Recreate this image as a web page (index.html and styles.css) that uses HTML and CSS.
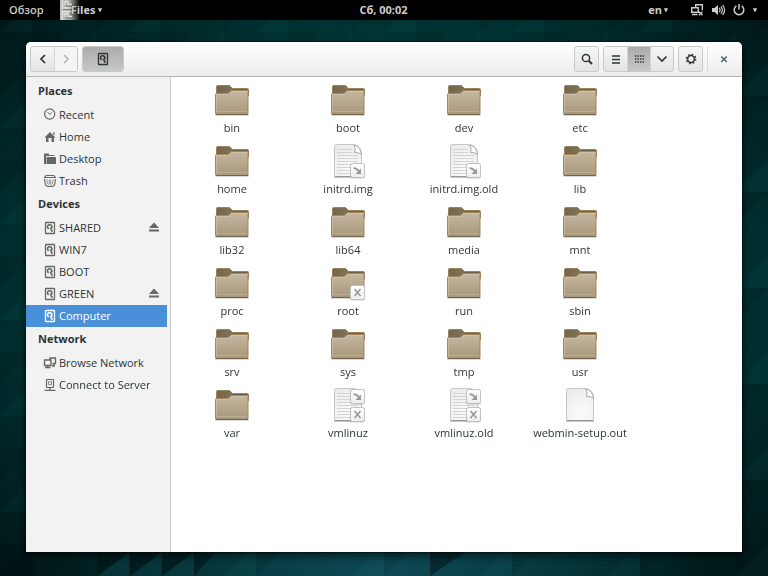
FILE: index.html
```html
<!DOCTYPE html>
<html lang="en">
<head>
<meta charset="utf-8">
<title>Files</title>
<link rel="stylesheet" href="styles.css">
</head>
<body>
<svg class="defs" aria-hidden="true">
  <defs>
    <linearGradient id="g-front" x1="0" y1="0" x2="0" y2="1"><stop offset="0" stop-color="#c5b8a1"/><stop offset="1" stop-color="#a79678"/></linearGradient>
    <linearGradient id="g-back" x1="0" y1="0" x2="1" y2="0"><stop offset="0" stop-color="#75664b"/><stop offset="1" stop-color="#8f7f65"/></linearGradient>
    <radialGradient id="g-paper" cx=".55" cy=".75" r=".8"><stop offset="0" stop-color="#fcfcfc"/><stop offset="1" stop-color="#ebebea"/></radialGradient>
    <linearGradient id="g-emblem" x1="0" y1="0" x2="0" y2="1"><stop offset="0" stop-color="#fff"/><stop offset="1" stop-color="#eee"/></linearGradient>
    <linearGradient id="g-cab" x1="0" y1="0" x2="1" y2="0"><stop offset="0" stop-color="#c2c2bc"/><stop offset=".5" stop-color="#a2a29c"/><stop offset="1" stop-color="#a2a29c" stop-opacity="0"/></linearGradient>
    <symbol id="folder" viewBox="0 0 40 40">
      <rect x="3" y="34" width="34" height="2" rx="1" fill="#000" opacity=".15"/>
      <path d="M4.500 16V6.500q0-1 1-1h12l3 3h15q1 0 1 1V16z" fill="url(#g-back)" stroke="#97835f"/>
      <path d="M20.500 9.500h15" stroke="#6f6047" fill="none"/>
      <path d="M3.500 14.500q0-1 1-1h11.500l3.500-3h15.500q1 0 1 1V33.500q0 1-1 1H4.500q-1 0-1-1z" fill="url(#g-front)" stroke="#a3875a"/>
      <path d="M4.500 32.500V14.500h12l3.500-3h15.500" fill="none" stroke="#d6cbb7" opacity=".5"/>
      <path d="M5 31.500h30" stroke="#bcae94"/>
      <path d="M4 34.500h32" stroke="#74654b"/>
    </symbol>
    <symbol id="paper" viewBox="0 0 40 40">
      <rect x="6" y="35" width="28" height="2" rx="1" fill="#000" opacity=".22"/>
      <path d="M8.500 3.500H26q7 2 7.500 8.500v23q0 .5-.5.5H7q-.5 0-.5-.5V5.500q0-2 2-2z" fill="url(#g-paper)" stroke="#c6c6c4"/>
      <path d="M26 4q2 4 .5 7.500 4-.5 7 2-1-8-7.500-9.500z" fill="#fff" stroke="#aaaaa8"/>
      <path d="M7 35.500h26" stroke="#979795"/>
    </symbol>
    <symbol id="text-lines" viewBox="0 0 40 40">
      <path d="M9 8.500h15M9 11.500h15M9 14.500h21M9 17.500h21M9 20.500h21M9 23.500h21M9 26.500h21M9 29.500h14M9 32.500h14" stroke="#d3d3d1"/>
    </symbol>
    <symbol id="emblem" viewBox="0 0 17 17">
      <rect x="1" y="1.500" width="15" height="15" rx="2" fill="#000" opacity=".2"/>
      <rect x="1.500" y="1.500" width="14" height="14" rx="2" fill="url(#g-emblem)" stroke="#c0c0be"/>
    </symbol>
    <symbol id="link-emblem" viewBox="0 0 17 17"><use href="#emblem"/><path d="M4.500 6.200q3.500 0 5.500 3.200" stroke="#989896" stroke-width="1.800" fill="none"/><path d="M12 6.500v5.500H6.500z" fill="#989896"/></symbol>
    <symbol id="lock-emblem" viewBox="0 0 17 17"><use href="#emblem"/><path d="M5.500 5l6 7M11.500 5l-6 7" stroke="#989896" stroke-width="1.600"/></symbol>

    <symbol id="recent" viewBox="0 0 16 16"><circle cx="7.700" cy="7" r="5.100" fill="none" stroke="currentColor" stroke-width="1.200"/><path d="M5.500 5l2.200 2.500L10 5.500" fill="none" stroke="currentColor"/></symbol>
    <symbol id="home" viewBox="0 0 16 16"><path d="M2.500 8.500L8 3l5.500 5.500h-1.500v4.500H9.500V9h-3v4H4V8.500z" fill="currentColor"/><path d="M11 3.500h1.500v3L11 5z" fill="currentColor"/></symbol>
    <symbol id="desktop" viewBox="0 0 16 16"><path d="M2 13V3q0-.5.500-.5h4q.5 0 .5.500v1h5.500v1H4v8z" fill="currentColor"/><path d="M5 6h8.500q.5 0 .5.500V12.500q0 .5-.5.500H4.500V6.500q0-.5.500-.5z" fill="currentColor"/></symbol>
    <symbol id="trash" viewBox="0 0 16 16"><path d="M2 4.500h12M3 4.500q0-2 2-2h6q2 0 2 2M2.800 6q-.3 7 2.700 7.300h5q3-.3 2.700-7.300" fill="none" stroke="currentColor" stroke-width="1.200"/><path d="M5 6.500q-.3 3.500 1 5M7.200 6.500v5M8.800 6.500v5M11 6.500q.3 3.500-1 5" fill="none" stroke="currentColor" stroke-width=".7"/></symbol>
    <symbol id="drive" viewBox="0 0 16 16"><rect x="3.500" y="2.500" width="9" height="11" rx=".6" fill="none" stroke="currentColor" stroke-width="1.300"/><path d="M6.700 8.900A2.200 2.200 0 1 1 9.600 8L8 8.200" fill="none" stroke="currentColor" stroke-width="1.600"/><path d="M7.500 7.500l3.300 2.800v1.500H9.200z" fill="currentColor"/></symbol>
    <symbol id="browse" viewBox="0 0 16 16"><path d="M2.500 5h6.500v5.500H2.500zM8 5V3h5.500v5.500h-3M3 12.500h5.500M10 11h3" fill="none" stroke="currentColor" stroke-width="1.400"/><path d="M5 10.500h1.500v2H5zM11 8.500h1.500v2.500H11z" fill="currentColor"/></symbol>
    <symbol id="server" viewBox="0 0 16 16"><rect x="4.500" y="2.500" width="7" height="8" rx=".5" fill="none" stroke="currentColor" stroke-width="1.200"/><path d="M2.500 13.400h11M8 10.500v3" stroke="currentColor" stroke-width="1.300"/><path d="M6.500 4.700h3v3h-3z" fill="none" stroke="currentColor" stroke-width=".7"/></symbol>
    <symbol id="eject" viewBox="0 0 16 16"><path d="M8 2.500L13 8H3zM3 9.500h10v2H3z" fill="currentColor"/></symbol>
    <symbol id="back" viewBox="0 0 16 16"><path d="M10 4L6 8l4 4" fill="none" stroke="currentColor" stroke-width="1.700"/></symbol>
    <symbol id="forward" viewBox="0 0 16 16"><path d="M6 4l4 4-4 4" fill="none" stroke="currentColor" stroke-width="1.500"/></symbol>
    <symbol id="down" viewBox="0 0 16 16"><path d="M3.500 5.500L8 10l4.500-4.500" fill="none" stroke="currentColor" stroke-width="1.600"/></symbol>
    <symbol id="search" viewBox="0 0 16 16"><circle cx="7" cy="7" r="3.600" fill="none" stroke="currentColor" stroke-width="1.500"/><path d="M9.700 9.700l3.300 3.300" stroke="currentColor" stroke-width="2"/></symbol>
    <symbol id="list" viewBox="0 0 16 16"><path d="M4 5h8M4 8.500h8M4 12h8" stroke="currentColor" stroke-width="1.600"/></symbol>
    <symbol id="grid" viewBox="0 0 16 16"><path d="M4 5h9M4 8h9M4 11h9" stroke="currentColor" stroke-width="1.300" stroke-dasharray="1.400 1.100"/></symbol>
    <symbol id="gear" viewBox="0 0 16 16"><circle cx="8" cy="8" r="3.400" fill="none" stroke="currentColor" stroke-width="1.500"/><circle cx="8" cy="8" r="4.700" fill="none" stroke="currentColor" stroke-width="1.300" stroke-dasharray="1.700 1.991"/></symbol>
    <symbol id="close" viewBox="0 0 16 16"><path d="M5.300 5.500l5.400 5.500M10.700 5.500L5.300 11" stroke="currentColor" stroke-width="1.600"/></symbol>
    <symbol id="wired" viewBox="0 0 16 16"><path d="M2.700 5.700h6.600v4.600H2.700zM6.700 5V2.700h6.600v5.600M3 12.500h5.500" fill="none" stroke="currentColor" stroke-width="1.400"/><path d="M10 9.800l3.500 3.500M13.500 9.800L10 13.300" stroke="currentColor" stroke-width="1.400"/></symbol>
    <symbol id="volume" viewBox="0 0 16 16"><path d="M2 6h2.500L8 3v10l-3.500-3H2z" fill="currentColor"/><path d="M9.300 5.800q1.500 2.200 0 4.400M11 4.300q2.700 3.700 0 7.400M12.700 3q3.700 5 0 10" fill="none" stroke="currentColor" stroke-width="1.200"/></symbol>
    <symbol id="power" viewBox="0 0 16 16"><path d="M5.300 3.900a4.800 4.800 0 1 0 5.400 0M8 2v5.500" fill="none" stroke="currentColor" stroke-width="1.500"/></symbol>
    <symbol id="caret" viewBox="0 0 6 6"><path d="M.8 1.200h4.400L3 5.500z" fill="currentColor"/></symbol>
    <symbol id="cabinet" viewBox="0 0 20 20"><rect width="20" height="20" fill="url(#g-cab)"/><path d="M2.500 0v8h10M2.500 11v9M2.500 11.500h11M5 5V1.500h3v3h4M5 17v-3.500h3v3h4" fill="none" stroke="#e4e4de" stroke-width="1.300"/><path d="M3 9.500h10M6 6h8M6 18h8" stroke="#7c7c76"/></symbol>
  </defs>
</svg>

<svg class="wallpaper" viewBox="0 0 768 576" preserveAspectRatio="xMidYMid slice" aria-hidden="true">
  <defs>
    <radialGradient id="w-base" cx=".5" cy=".5" r=".68"><stop offset="0" stop-color="#004d4b"/><stop offset=".6" stop-color="#003838"/><stop offset="1" stop-color="#001718"/></radialGradient>
    <radialGradient id="w-low" cx=".5" cy="1" r=".4"><stop offset="0" stop-color="#0e4956"/><stop offset="1" stop-color="#0e4956" stop-opacity="0"/></radialGradient>
    <pattern id="w-tri" width="128" height="96" patternUnits="userSpaceOnUse">
      <path d="M0 32L32 0v32zM64 64l32-32v32zM96 96l32-32v32z" fill="#18867c" opacity=".07"/>
      <path d="M32 32h32L32 64zM96 0h32L96 32zM0 64h32L0 96z" fill="#000" opacity=".09"/>
      <path d="M64 0v32M32 64v32M0 32h32M64 64h32" stroke="#000" opacity=".1"/>
    </pattern>
  </defs>
  <rect width="768" height="576" fill="url(#w-base)"/>
  <rect width="768" height="576" fill="url(#w-low)"/>
  <rect width="768" height="576" fill="url(#w-tri)"/>
  <path d="M130 576l32-24v24zM98 576l32-24v24zM162 576l32-24v24z" fill="#0c4149" opacity=".4"/>
  <path d="M97 552h33l-33 24zM130 552h32l-32 24zM162 552h32l-32 24zM194 552h22l-22 24zM0 576h33v-34zM430 552h35l-35 24z" fill="#001012" opacity=".5"/>
</svg>

<div class="desktop">
  <header class="topbar">
    <nav class="top-left">
      <a href="#" class="activities">Обзор</a>
      <a href="#" class="app-menu"><svg class="cabinet"><use href="#cabinet"/></svg><span>Files</span><svg class="caret"><use href="#caret"/></svg></a>
    </nav>
    <time class="clock">Сб, 00:02</time>
    <div class="top-right">
      <a href="#" class="lang">en<svg class="caret"><use href="#caret"/></svg></a>
      <svg class="icon"><use href="#wired"/></svg>
      <svg class="icon"><use href="#volume"/></svg>
      <svg class="icon"><use href="#power"/></svg>
      <svg class="caret"><use href="#caret"/></svg>
    </div>
  </header>

  <main class="window">
    <div class="toolbar">
      <div class="group">
        <button aria-label="Back"><svg class="icon"><use href="#back"/></svg></button>
        <button aria-label="Forward" disabled><svg class="icon"><use href="#forward"/></svg></button>
      </div>
      <div class="group path"><button class="active" aria-label="Computer"><svg class="icon"><use href="#drive"/></svg></button></div>
      <div class="spacer"></div>
      <div class="group"><button aria-label="Search"><svg class="icon"><use href="#search"/></svg></button></div>
      <div class="group">
        <button aria-label="List view"><svg class="icon"><use href="#list"/></svg></button>
        <button class="active" aria-label="Icon view"><svg class="icon"><use href="#grid"/></svg></button>
        <button aria-label="View options"><svg class="icon"><use href="#down"/></svg></button>
      </div>
      <div class="group"><button aria-label="Settings"><svg class="icon"><use href="#gear"/></svg></button></div>
      <button class="close" aria-label="Close"><svg class="icon"><use href="#close"/></svg></button>
    </div>

    <div class="body">
      <nav class="sidebar">
        <h2>Places</h2>
        <ul>
          <li><a href="#"><svg class="icon"><use href="#recent"/></svg>Recent</a></li>
          <li><a href="#"><svg class="icon"><use href="#home"/></svg>Home</a></li>
          <li><a href="#"><svg class="icon"><use href="#desktop"/></svg>Desktop</a></li>
          <li><a href="#"><svg class="icon"><use href="#trash"/></svg>Trash</a></li>
        </ul>
        <h2>Devices</h2>
        <ul>
          <li><a href="#"><svg class="icon"><use href="#drive"/></svg>SHARED</a><button aria-label="Eject SHARED"><svg class="icon"><use href="#eject"/></svg></button></li>
          <li><a href="#"><svg class="icon"><use href="#drive"/></svg>WIN7</a></li>
          <li><a href="#"><svg class="icon"><use href="#drive"/></svg>BOOT</a></li>
          <li><a href="#"><svg class="icon"><use href="#drive"/></svg>GREEN</a><button aria-label="Eject GREEN"><svg class="icon"><use href="#eject"/></svg></button></li>
          <li class="selected"><a href="#"><svg class="icon"><use href="#drive"/></svg>Computer</a></li>
        </ul>
        <h2>Network</h2>
        <ul>
          <li><a href="#"><svg class="icon"><use href="#browse"/></svg>Browse Network</a></li>
          <li><a href="#"><svg class="icon"><use href="#server"/></svg>Connect to Server</a></li>
        </ul>
      </nav>

      <ul class="files">
        <li><a href="#"><svg><use href="#folder"/></svg>bin</a></li>
        <li><a href="#"><svg><use href="#folder"/></svg>boot</a></li>
        <li><a href="#"><svg><use href="#folder"/></svg>dev</a></li>
        <li><a href="#"><svg><use href="#folder"/></svg>etc</a></li>
        <li><a href="#"><svg><use href="#folder"/></svg>home</a></li>
        <li><a href="#"><svg><use href="#paper"/><use href="#text-lines"/><use href="#link-emblem" x="21" y="21" width="17" height="17"/></svg>initrd.img</a></li>
        <li><a href="#"><svg><use href="#paper"/><use href="#text-lines"/><use href="#link-emblem" x="21" y="21" width="17" height="17"/></svg>initrd.img.old</a></li>
        <li><a href="#"><svg><use href="#folder"/></svg>lib</a></li>
        <li><a href="#"><svg><use href="#folder"/></svg>lib32</a></li>
        <li><a href="#"><svg><use href="#folder"/></svg>lib64</a></li>
        <li><a href="#"><svg><use href="#folder"/></svg>media</a></li>
        <li><a href="#"><svg><use href="#folder"/></svg>mnt</a></li>
        <li><a href="#"><svg><use href="#folder"/></svg>proc</a></li>
        <li><a href="#"><svg><use href="#folder"/><use href="#lock-emblem" x="21" y="21" width="17" height="17"/></svg>root</a></li>
        <li><a href="#"><svg><use href="#folder"/></svg>run</a></li>
        <li><a href="#"><svg><use href="#folder"/></svg>sbin</a></li>
        <li><a href="#"><svg><use href="#folder"/></svg>srv</a></li>
        <li><a href="#"><svg><use href="#folder"/></svg>sys</a></li>
        <li><a href="#"><svg><use href="#folder"/></svg>tmp</a></li>
        <li><a href="#"><svg><use href="#folder"/></svg>usr</a></li>
        <li><a href="#"><svg><use href="#folder"/></svg>var</a></li>
        <li><a href="#"><svg><use href="#paper"/><use href="#text-lines"/><use href="#link-emblem" x="21" y="3" width="17" height="17"/><use href="#lock-emblem" x="21" y="21" width="17" height="17"/></svg>vmlinuz</a></li>
        <li><a href="#"><svg><use href="#paper"/><use href="#text-lines"/><use href="#link-emblem" x="21" y="3" width="17" height="17"/><use href="#lock-emblem" x="21" y="21" width="17" height="17"/></svg>vmlinuz.old</a></li>
        <li><a href="#"><svg><use href="#paper"/></svg>webmin-setup.out</a></li>
      </ul>
    </div>
  </main>
</div>
</body>
</html>
```
FILE: styles.css
```css
* { box-sizing: border-box; }

body {
  margin: 0;
  background: #000;
  color: #2e3436;
  font: 500 11px/16px "Open Sans", "Noto Sans", sans-serif;
}

a { color: inherit; text-decoration: none; }
ul { list-style: none; margin: 0; padding: 0; }
svg { display: block; flex: none; }
button { font: inherit; color: inherit; border: 0; padding: 0; background: none; }

.defs { position: absolute; width: 0; height: 0; }
.icon { width: 16px; height: 16px; }
.caret { width: 6px; height: 6px; }

.wallpaper { position: fixed; inset: 0; width: 100%; height: 100%; }

.desktop {
  position: relative;
  display: flex;
  flex-direction: column;
  min-height: 100vh;
}

.topbar {
  display: grid;
  grid-template-columns: 1fr auto 1fr;
  align-items: center;
  height: 20px;
  padding: 0 10px 0 9px;
  background: #000;
  color: #ccc;
  font-weight: 700;
}

.top-left, .top-right, .app-menu, .lang { display: flex; align-items: center; }
.top-left { gap: 16px; }
.activities { font-weight: 600; }
.app-menu span { margin: 0 2px 0 -9px; text-shadow: 0 0 2px #000; }
.cabinet { width: 20px; height: 20px; }
.top-right { justify-content: flex-end; gap: 5px; }
.lang { gap: 1px; margin-right: 15px; }

.window {
  flex: 1;
  display: flex;
  flex-direction: column;
  margin: 22px 26px 24px;
  border-radius: 5px 5px 0 0;
  background: #fff;
  box-shadow: 0 0 0 1px rgba(0, 0, 0, .3), 0 3px 9px 1px rgba(0, 0, 0, .6);
}

.toolbar {
  display: flex;
  align-items: center;
  gap: 4px;
  height: 35px;
  padding: 0 3px 0 4px;
  border-bottom: 1px solid #b4b6b4;
  border-radius: 5px 5px 0 0;
  background: linear-gradient(#fff, #ededed);
}

.group {
  display: flex;
  height: 26px;
  border: 1px solid #c8cac8;
  border-radius: 3px;
  background: linear-gradient(#f6f6f6, #e4e4e4);
  overflow: hidden;
}

.group button {
  display: grid;
  place-items: center;
  width: 23px;
}

.group button + button { border-left: 1px solid #d4d6d4; }
.group .active { background: linear-gradient(#a9aca9, #c6c8c6); }
.group button:disabled { background: #f4f4f4; color: #b0b2b0; }
.path button { width: 40px; }
.spacer { flex: 1; }

.close {
  display: grid;
  place-items: center;
  width: 32px;
  height: 26px;
  border-left: 1px solid #ddd;
  color: #55646b;
}

.body { flex: 1; display: flex; }

.sidebar {
  width: 145px;
  padding-top: 2px;
  border-right: 1px solid #c8c8c8;
  background: #f2f2f2;
}

.sidebar h2 {
  height: 25px;
  margin: 0;
  padding: 4px 12px;
  font-size: 11px;
  font-weight: 700;
}

.sidebar li {
  display: flex;
  align-items: center;
  justify-content: space-between;
  height: 22px;
  margin-right: 3px;
  padding: 0 5px 0 16px;
}

.sidebar a { display: flex; align-items: center; gap: 1px; white-space: nowrap; }
.sidebar .icon { color: #666864; }
.sidebar .selected { background: #4a90d9; color: #fff; }
.sidebar .selected .icon { color: #fff; }

.files {
  flex: 1;
  display: grid;
  grid-template-columns: repeat(auto-fill, 116px);
  grid-auto-rows: 61px;
  align-content: start;
  padding: 3px 0 0 3px;
}

.files a {
  display: flex;
  flex-direction: column;
  align-items: center;
}

.files svg { width: 40px; height: 40px; }
```
